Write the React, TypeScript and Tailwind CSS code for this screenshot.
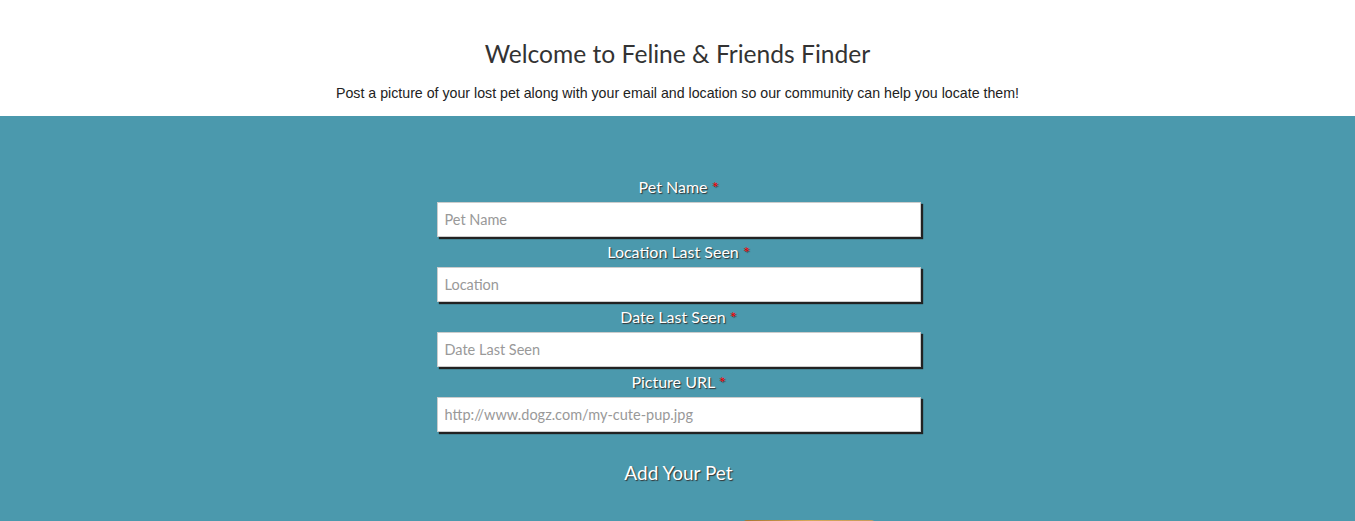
const FIELDS = [
  { label: "Pet Name", placeholder: "Pet Name" },
  { label: "Location Last Seen", placeholder: "Location" },
  { label: "Date Last Seen", placeholder: "Date Last Seen" },
  { label: "Picture URL", placeholder: "http://www.dogz.com/my-cute-pup.jpg" },
];

export default function App() {
  return (
    <div className="min-h-screen bg-white font-['Lato','Noto_Sans',sans-serif]">
      <header className="flex flex-col items-center pt-[38px] pb-[13px]">
        <h1 className="text-[24.6px] leading-8 text-[#333]">
          Welcome to Feline &amp; Friends Finder
        </h1>
        <p className="mt-[13px] font-['Liberation_Sans',Arial,sans-serif] text-[14.2px] leading-5 text-[#222]">
          Post a picture of your lost pet along with your email and location so our community can help you locate them!
        </p>
      </header>

      <section className="bg-[#4b99ad] pt-[61px] pb-10">
        <form className="mx-auto flex w-[484px] translate-x-[1px] flex-col gap-[5px]">
          {FIELDS.map((f) => (
            <div key={f.label} className="flex flex-col items-center gap-[5px]">
              <label className="text-[16px] leading-5 text-white [text-shadow:1px_1px_1px_#333]">
                {f.label} <span className="text-[#f00]">*</span>
              </label>
              <input
                type="text"
                placeholder={f.placeholder}
                className="h-[35px] w-full border border-[#ccc] bg-white px-[7px] text-[14.5px] text-[#333] shadow-[2px_2px_1px_#222] outline-none placeholder:text-[#999]"
              />
            </div>
          ))}

          <button
            type="button"
            className="mt-[24px] self-center text-[19px] leading-6 text-white [text-shadow:1px_1px_1px_#333]"
          >
            Add Your Pet
          </button>

          {/* pet photo card peeking in at the bottom */}
          <div className="mt-[30px] ml-[306px] h-[40px] w-[132px] rounded-t-sm bg-gradient-to-r from-[#a87430] via-[#d8a85a] to-[#c89a5a]" />
        </form>
      </section>
    </div>
  );
}
